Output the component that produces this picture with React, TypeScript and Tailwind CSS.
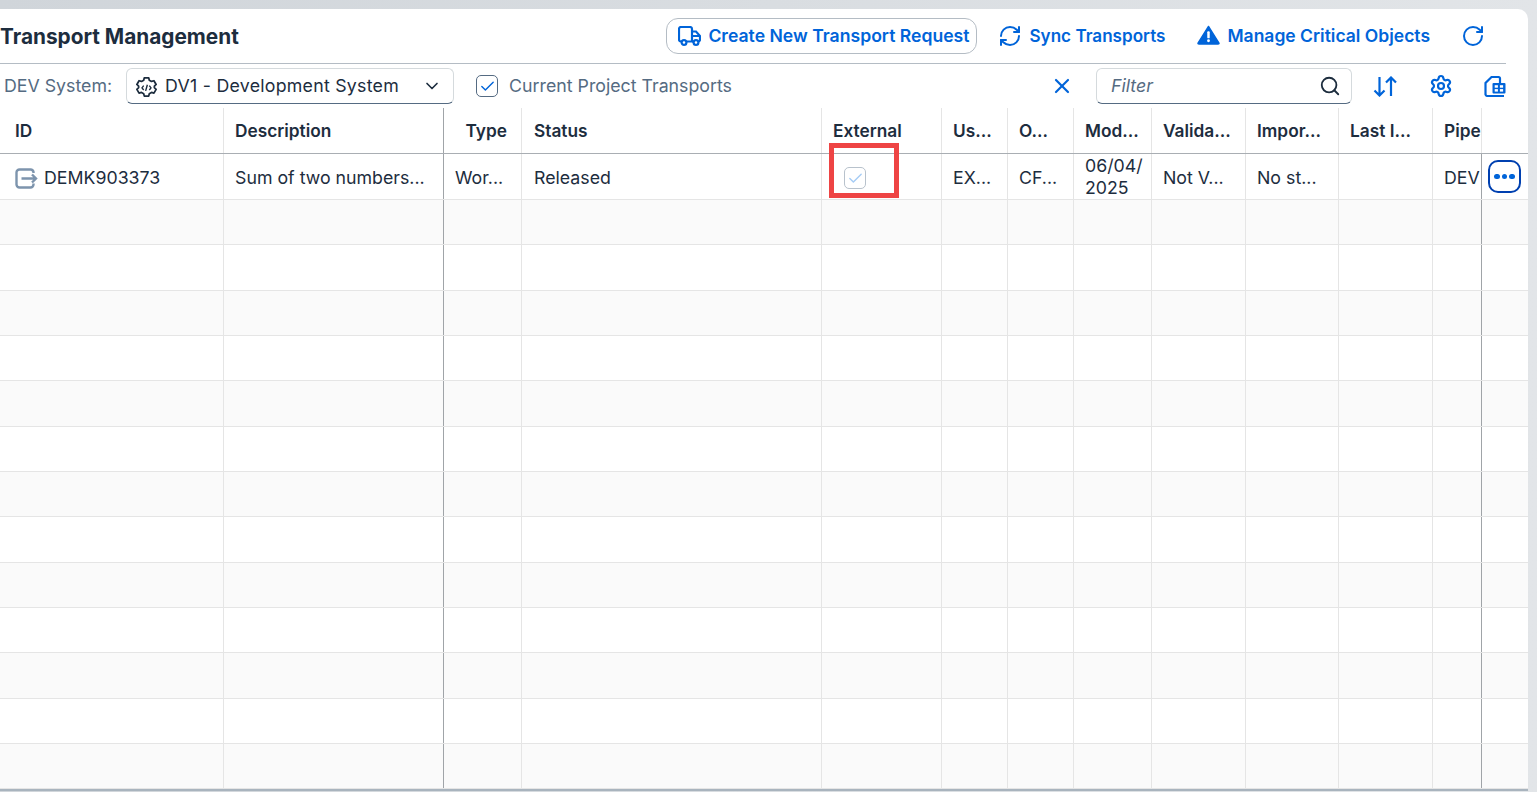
import React from "react";
import { Check, ChevronDown, RefreshCw, RotateCw, Search, Settings, X } from "lucide-react";

const rowGrid =
  "grid grid-cols-[224px_220px_78px_300px_120px_66px_66px_78px_94px_93px_94px_49px_46px]";

const cellBorder = [
  "border-r border-[#e5e5e5]",
  "border-r border-[#a0a4a8]",
  "border-r border-[#e5e5e5]",
  "border-r border-[#e5e5e5]",
  "border-r border-[#e5e5e5]",
  "border-r border-[#e5e5e5]",
  "border-r border-[#e5e5e5]",
  "border-r border-[#e5e5e5]",
  "border-r border-[#e5e5e5]",
  "border-r border-[#e5e5e5]",
  "border-r border-[#e5e5e5]",
  "border-r border-[#a0a4a8]",
  "",
];

const headers = ["ID", "Description", "Type", "Status", "External", "Us...", "O...", "Mod...", "Valida...", "Impor...", "Last I...", "Pipe", ""];

function TruckIcon() {
  return (
    <svg width="23" height="20" viewBox="0 0 23 20" fill="none" stroke="#0064d9" strokeWidth="2.200">
      <path d="M3.500 15.500H3A2 2 0 0 1 1 13.500V3A2 2 0 0 1 3 1H12A2 2 0 0 1 14 3V15.500H8.500" />
      <path d="M14 5.500H18L22 10V13.500A2 2 0 0 1 20.500 15.500" />
      <path d="M14 10H22" />
      <path d="M14 15.500H15.500" />
      <circle cx="6" cy="16.500" r="2.400" />
      <circle cx="18" cy="16.500" r="2.400" />
    </svg>
  );
}

function WarningIcon() {
  return (
    <svg width="23" height="20" viewBox="0 0 24 21" className="mt-[-2px]">
      <path d="M12 1.500 L23 19 Q23.300 20 22 20 H2 Q0.700 20 1 19 Z" fill="#0064d9" stroke="#0064d9" strokeWidth="1.500" strokeLinejoin="round" />
      <rect x="10.700" y="6.500" width="2.600" height="7.500" rx="1" fill="#fff" />
      <circle cx="12" cy="16.500" r="1.500" fill="#fff" />
    </svg>
  );
}

function SortIcon() {
  return (
    <svg width="24" height="21" viewBox="0 0 24 21" fill="none" stroke="#0064d9" strokeWidth="2.200">
      <path d="M6.500 1V19.500M1.500 14.500L6.500 19.500L11.500 14.500" />
      <path d="M18 20V1.500M13 6.500L18 1.500L23 6.500" />
    </svg>
  );
}

function ExportIcon() {
  return (
    <svg width="22" height="23" viewBox="0 0 22 23" fill="none" stroke="#0064d9" strokeWidth="2.200">
      <path d="M20 21H3A2 2 0 0 1 1.500 19.500V8L7.500 2H14.500A1.500 1.500 0 0 1 16 3.500V8" />
      <rect x="8.500" y="8" width="13" height="10.500" rx="1" fill="#0064d9" stroke="none" />
      <rect x="10.700" y="10.200" width="3.200" height="2.500" fill="#fff" stroke="none" />
      <rect x="15.900" y="10.200" width="3.200" height="2.500" fill="#fff" stroke="none" />
      <rect x="10.700" y="14.100" width="3.200" height="2.500" fill="#fff" stroke="none" />
      <rect x="15.900" y="14.100" width="3.200" height="2.500" fill="#fff" stroke="none" />
    </svg>
  );
}

function CodeGearIcon() {
  return (
    <svg width="21" height="21" viewBox="0 0 24 24" fill="none" stroke="#1d2d3e" strokeWidth="2" strokeLinejoin="round">
      <path d="M9.500 2h5l.7 2.800 2.500 1.400 2.800-.8 2.500 4.300-2 2v1.600l2 2-2.500 4.300-2.800-.8-2.500 1.400-.7 2.800h-5l-.7-2.800-2.500-1.400-2.800.8-2.500-4.300 2-2v-1.600l-2-2 2.500-4.300 2.800.8 2.500-1.400z" />
      <path d="M8.800 11 6.800 13.500 8.800 16M15.200 11l2 2.500-2 2.500M13 10l-2 7" strokeWidth="1.600" />
    </svg>
  );
}

function TransportRowIcon() {
  return (
    <svg width="23" height="21" viewBox="0 0 23 21" fill="none" stroke="#7d94ad" strokeWidth="2.400">
      <path d="M18.500 5V4A3 3 0 0 0 15.500 1.500H4.500A3 3 0 0 0 1.500 4.500V16.500A3 3 0 0 0 4.500 19.500H15.500A3 3 0 0 0 18.500 16.500V15.500" />
      <path d="M6.500 10.500H21M17 6.500L21 10.500L17 14.500" />
    </svg>
  );
}

function HeaderAction({ icon, text, className }: { icon: React.ReactNode; text: string; className: string }) {
  return (
    <button className={`flex items-center gap-[7px] text-[#0064d9] font-semibold ${className}`}>
      {icon}
      <span>{text}</span>
    </button>
  );
}

function CheckBox({ disabled }: { disabled?: boolean }) {
  return (
    <span
      className={
        disabled
          ? "flex items-center justify-center w-[22px] h-[22px] rounded-[5px] border border-[#b8c2cc] bg-white"
          : "flex items-center justify-center w-[22px] h-[22px] rounded-[5px] border border-[#556b82] bg-white"
      }
    >
      <Check size={17} strokeWidth={2} color={disabled ? "#a6ccf5" : "#0064d9"} />
    </span>
  );
}

function EmptyRow({ even }: { even: boolean }) {
  return (
    <div className={`${rowGrid} h-[45.350px] border-b border-[#e5e5e5] ${even ? "bg-[#fafafa]" : "bg-white"}`}>
      {cellBorder.map((b, i) => (
        <div key={i} className={b} />
      ))}
    </div>
  );
}

export default function App() {
  const dataCell = "flex items-center px-[11px] pt-[3px] whitespace-nowrap overflow-hidden text-[#1d2d3e]";

  return (
    <div className="w-[1537px] h-[792px] overflow-hidden bg-linear-to-r from-[#d0d5da] to-[#e2e5e8] pt-[9px] text-[17.750px] font-['Inter','Noto_Sans',sans-serif]">
      <div className="w-[1528px] h-[782px] bg-white rounded-tr-[10px] relative overflow-hidden border-b-2 border-[#a9b4be]">
        {/* title bar */}
        <div className="h-[55px] flex items-center justify-between border-b border-[#b4bcc4] mr-[22px]">
          <h1 className="font-bold text-[20.800px] pt-[1px] text-[#1d2d3e]">Transport Management</h1>
          <div className="flex items-center pr-[21px] text-[17.600px]">
            <button className="flex items-center gap-[7px] h-[36px] pl-[11px] pr-[7px] rounded-[12px] border border-[#b4bcc4] text-[#0064d9] font-semibold">
              <TruckIcon />
              <span>Create New Transport Request</span>
            </button>
            <div className="ml-[21px]">
              <HeaderAction className="text-[17.100px]" icon={<RefreshCw size={24} strokeWidth={2} />} text="Sync Transports" />
            </div>
            <div className="ml-[32px]">
              <HeaderAction className="text-[17.500px]" icon={<WarningIcon />} text="Manage Critical Objects" />
            </div>
            <RotateCw size={24} strokeWidth={2} color="#0064d9" className="ml-[31px]" />
          </div>
        </div>

        {/* filter bar */}
        <div className="h-[44px] flex items-center">
          <span className="ml-[4px] text-[#556b82]">DEV System:</span>
          <div className="ml-[14px] w-[328px] h-[36px] flex items-center rounded-[6px] border border-[#d5dadd] border-b-[#556b82] pl-[9px] pr-[11px] text-[#1d2d3e]">
            <CodeGearIcon />
            <span className="ml-[8px] tracking-[0.25px]">DV1 - Development System</span>
            <ChevronDown size={20} className="ml-auto" />
          </div>
          <div className="ml-[22px]">
            <CheckBox />
          </div>
          <span className="ml-[11px] text-[#556b82]">Current Project Transports</span>
          <X size={24} strokeWidth={2.200} color="#0064d9" className="ml-[318px]" />
          <div className="ml-[22px] w-[256px] h-[36px] flex items-center rounded-[6px] border border-[#d5dadd] border-b-[#556b82] pl-[14px] pr-[10px]">
            <span className="italic text-[#556b82]">Filter</span>
            <Search size={22} strokeWidth={2} color="#1d2d3e" className="ml-auto" />
          </div>
          <div className="ml-[21px]">
            <SortIcon />
          </div>
          <Settings size={24} strokeWidth={2.200} color="#0064d9" className="ml-[32px]" />
          <div className="ml-[31px]">
            <ExportIcon />
          </div>
        </div>

        {/* table */}
        <div className={`${rowGrid} h-[46px] border-b border-[#a9aeb3]`}>
          {headers.map((h, i) => (
            <div
              key={i}
              className={`${i === 11 ? "border-r border-[#e5e5e5]" : cellBorder[i]} flex items-center px-[11px] pt-[1px] text-[17.300px] font-semibold text-[#1d2d3e] whitespace-nowrap overflow-hidden ${i === 2 ? "justify-end pr-[14px]" : ""} ${i === 3 ? "pl-[12px]" : ""} ${i === 11 ? "pr-0" : ""}`}
            >
              {i === 0 ? <span className="ml-[4px]">{h}</span> : h}
            </div>
          ))}
        </div>
        <div className={`${rowGrid} h-[46px] border-b border-[#e5e5e5]`}>
          <div className={`${dataCell} ${cellBorder[0]} pl-[15px] gap-[6px]`}>
            <TransportRowIcon />
            <span>DEMK903373</span>
          </div>
          <div className={`${dataCell} ${cellBorder[1]}`}>Sum of two numbers...</div>
          <div className={`${dataCell} ${cellBorder[2]}`}>Wor...</div>
          <div className={`${dataCell} ${cellBorder[3]} pl-[12px]`}>Released</div>
          <div className={`${dataCell} ${cellBorder[4]} pl-[22px] pt-[2px]`}>
            <CheckBox disabled />
          </div>
          <div className={`${dataCell} ${cellBorder[5]}`}>EX...</div>
          <div className={`${dataCell} ${cellBorder[6]}`}>CF...</div>
          <div className={`${dataCell} ${cellBorder[7]} flex-col items-start justify-center leading-[22px] pt-0 pb-[2px]`}>
            <span>06/04/</span>
            <span>2025</span>
          </div>
          <div className={`${dataCell} ${cellBorder[8]}`}>Not V...</div>
          <div className={`${dataCell} ${cellBorder[9]}`}>No st...</div>
          <div className={`${dataCell} ${cellBorder[10]}`} />
          <div className={`${dataCell} ${cellBorder[11]} pr-0`}>DEV</div>
          <div className="flex items-center pl-[6px]">
            <span className="flex items-center justify-center gap-[2px] w-[33px] h-[33px] rounded-[10px] border-2 border-[#0040b0]">
              <span className="w-[5.500px] h-[5.500px] rounded-full bg-[#0064d9]" />
              <span className="w-[5.500px] h-[5.500px] rounded-full bg-[#0064d9]" />
              <span className="w-[5.500px] h-[5.500px] rounded-full bg-[#0064d9]" />
            </span>
          </div>
        </div>
        {Array.from({ length: 13 }, (_, i) => (
          <EmptyRow key={i} even={i % 2 === 0} />
        ))}

        {/* annotation drawn over the screenshot */}
        <div className="absolute left-[829px] top-[134px] w-[70px] h-[55px] border-[5px] border-[#ee4444]" />
      </div>
    </div>
  );
}
